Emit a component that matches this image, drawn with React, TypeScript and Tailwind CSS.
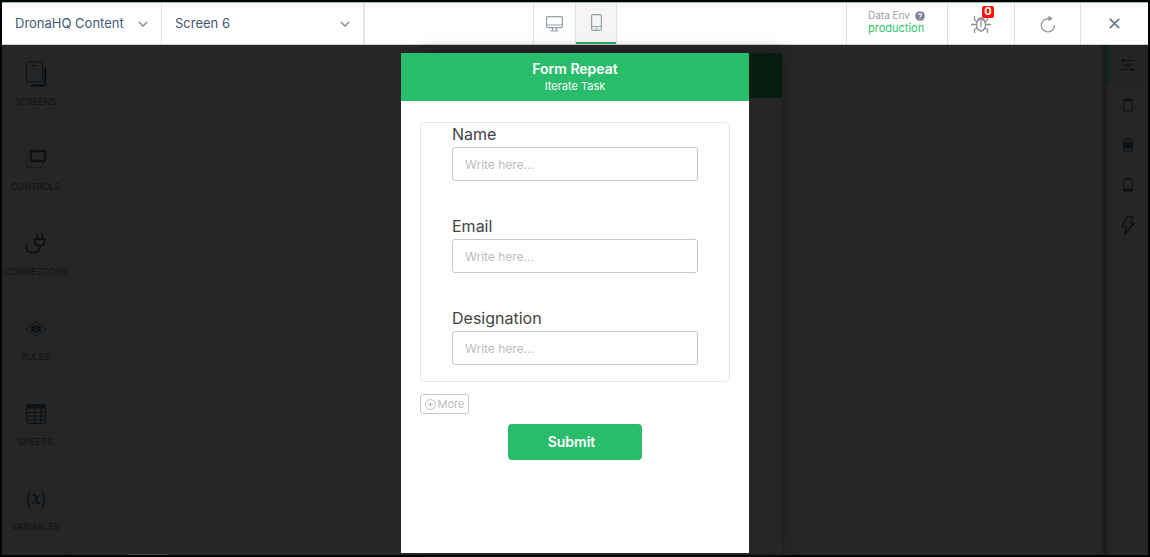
import type { ReactNode } from "react";

const Chevron = () => (
  <svg viewBox="0 0 10 6" className="pointer-events-none h-[6px] w-[10px] shrink-0" fill="none" stroke="#8e9498" strokeWidth="1.5">
    <path d="M.7.7 5 5.1 9.3.7" />
  </svg>
);

function Picker({ label, value, className }: { label: string; value: string; className: string }) {
  return (
    <div className={`grid items-center border-[#e4e6ea] ${className}`}>
      <select
        aria-label={label}
        className="col-start-1 row-start-1 h-full w-full appearance-none bg-transparent pl-[13px] pr-8 text-[13px] text-[#435a75] outline-none"
      >
        <option>{value}</option>
      </select>
      <span className="pointer-events-none col-start-1 row-start-1 mr-[13px] justify-self-end">
        <Chevron />
      </span>
    </div>
  );
}

function TopBar() {
  return (
    <header className="grid h-[43px] shrink-0 grid-cols-[1fr_auto_1fr] border-b border-t border-b-[#d0d0d0] border-t-[#8fc0b4] bg-white">
      <div className="flex">
        <Picker label="App" value="DronaHQ Content" className="w-40 border-r" />
        <Picker label="Screen" value="Screen 6" className="w-[203px] border-r-2" />
      </div>
      <div className="flex">
        <button aria-label="Desktop preview" className="flex w-[42px] items-center justify-center border-l border-[#dfe1e3]">
          <svg viewBox="0 0 17 16" className="h-4 w-[17px]" fill="none" stroke="#93a1a8" strokeWidth="1.2">
            <rect x=".6" y=".6" width="15.800" height="11" rx="1.2" />
            <path d="M.5 9h16M6.5 11.500v3M10.500 11.500v3M4.500 15h8" />
          </svg>
        </button>
        <button aria-label="Mobile preview" className="flex w-[42px] flex-col border-x border-[#dfe1e3] bg-[#f5f5f5]">
          <span className="flex w-full flex-1 items-center justify-center">
            <svg viewBox="0 0 11 17" className="h-[17px] w-[11px]" fill="none" stroke="#93a1a8" strokeWidth="1.2">
              <rect x=".6" y=".6" width="9.800" height="15.800" rx="1.5" />
              <path d="M.5 12.500h10M4.500 14.500h2" />
            </svg>
          </span>
          <span className="h-[2px] w-full bg-[#29ae65]" />
        </button>
      </div>
      <div className="flex justify-end">
        <div className="w-[101px] border-l border-[#dfe1e3] pl-[21px] pt-[6px]">
          <div className="flex items-center gap-[5px] text-[10px] leading-[13px] text-[#9a9fa5]">
            Data Env
            <svg viewBox="0 0 10 10" className="h-[10px] w-[10px]">
              <circle cx="5" cy="5" r="4.8" fill="#7f8294" />
              <path d="M3.6 4c0-1.9 2.9-1.8 2.9-.1C6.500 5 5.100 4.900 5.100 6M5.100 6.900v1" fill="none" stroke="#fff" strokeWidth="1.100" />
            </svg>
          </div>
          <div className="text-[11px] leading-[13px] text-[#2cc56f]">production</div>
        </div>
        <button aria-label="Debug, 0 issues" className="flex w-[67px] items-center justify-center border-l border-[#dfe1e3]">
          <span className="relative">
            <svg viewBox="0 0 20 18" className="h-[18px] w-5" fill="none" stroke="#8b9094" strokeWidth="1.300">
              <ellipse cx="10" cy="10" rx="4.500" ry="6" />
              <path d="M7 5.200c0-3 6-3 6 0M10 5v7M0 9.500h5.500M14.500 9.500H20M6 7 3.500 4.500V1M14 7l2.500-2.500V1M6 13l-2.500 1.500V18M14 13l2.500 1.500V18" />
            </svg>
            <span className="absolute -top-[9px] left-[11px] flex h-3 w-3 items-center justify-center rounded-[2px] bg-[#fb1208] text-[11px] font-bold leading-none text-white">
              0
            </span>
          </span>
        </button>
        <button aria-label="Reload" className="flex w-[66px] items-center justify-center border-l border-[#dfe1e3]">
          <svg viewBox="0 0 16 18" className="h-[18px] w-4" fill="none" stroke="#8b9094" strokeWidth="1.200">
            <path d="M9.500 3.600H8A6.700 6.700 0 1 0 14.700 10.300" />
            <path d="M8.500.8v5.400l4.200-2.700z" fill="#8b9094" stroke="none" />
          </svg>
        </button>
        <button aria-label="Close" className="flex w-[68px] items-center justify-center border-l border-[#dfe1e3]">
          <svg viewBox="0 0 11 11" className="h-[11px] w-[11px]" fill="none" stroke="#6e7b86" strokeWidth="1.700">
            <path d="m.8.8 9.400 9.400M10.200.8.8 10.200" />
          </svg>
        </button>
      </div>
    </header>
  );
}

const tools: { name: string; icon: ReactNode }[] = [
  {
    name: "SCREENS",
    icon: (
      <>
        <rect x="4.500" y="2" width="16" height="20" rx="2" strokeWidth="1" />
        <path d="M10.500 5.500h4.500M12 19h1" strokeWidth="1.200" />
        <path d="M23 7.500v16q0 2-2 2H9" strokeWidth="2.400" />
      </>
    ),
  },
  {
    name: "CONTROLS",
    icon: (
      <>
        <rect x="9" y="6" width="14" height="10" rx="1" strokeWidth="2.400" />
        <path d="M8 10.500H6q-1.500 0-1.500 1.500v9q0 1.500 1.500 1.500h13q1.500 0 1.500-1.500v-3.500" strokeDasharray="2 1" strokeWidth="1" />
      </>
    ),
  },
  {
    name: "CONNECTORS",
    icon: <path d="M15 3.500v5M20 3.500v5M11.500 8.800h12.500M13 9v3.500a5 5 0 0 0 9.500 0V9M17.800 16v2.500q-1 4-4 4H9q-4.500-.5-4.500-5V14" strokeWidth="1.800" />,
  },
  {
    name: "RULES",
    icon: (
      <>
        <path d="M4.500 14Q10 10 14 6.500 18 10 23.500 14 18 18 14 21.500 10 18 4.500 14Z" strokeWidth="1" />
        <ellipse cx="14" cy="14" rx="5" ry="3.800" fill="#0b1115" stroke="none" />
        <circle cx="14" cy="14" r="1.500" stroke="#262626" strokeWidth=".7" />
      </>
    ),
  },
  {
    name: "SHEETS",
    icon: (
      <>
        <rect x="4.500" y="4.500" width="19" height="19" rx="1.500" strokeWidth="1" />
        <path d="M4 4.500h20v4H4z" fill="#0b1115" stroke="none" />
        <path d="M4 12.500h20M4 16h20M4 20h20M13 8v16M19 8v16" strokeWidth="1" />
      </>
    ),
  },
  {
    name: "VARIABLES",
    icon: (
      <>
        <path d="M8.500 6.500Q6.300 6.500 6.500 9v2.500Q6.500 14 4.500 14q2 0 2 2.500V19q-.2 2.500 2 2.500M19.500 6.500q2.200 0 2 2.500v2.500q0 2.500 2 2.500-2 0-2 2.500V19q.2 2.500-2 2.500" strokeWidth="1.200" />
        <path d="M10.500 10.500q2-1.500 3 1l1.500 6q1 2 3 0" strokeWidth="2.200" />
        <path d="M18.500 10.500q-1.500-1.500-4 3t-4.500 5" strokeWidth="1.300" />
      </>
    ),
  },
];

function ToolRail() {
  return (
    <nav aria-label="Tools" className="w-[68px] shrink-0 border-r border-[#222]">
      {tools.map((t) => (
        <button
          key={t.name}
          className="flex w-full flex-col items-center border-b border-[#222] pb-5 pt-[15px] text-[9px] leading-[14px] text-[#111] last:border-0 last:pb-0"
        >
          <svg viewBox="0 0 28 28" className="mb-[7px] h-7 w-7" fill="none" stroke="#0b1115">
            {t.icon}
          </svg>
          {t.name}
        </button>
      ))}
    </nav>
  );
}

const panels: { name: string; icon: ReactNode }[] = [
  {
    name: "Properties",
    icon: (
      <>
        <path d="M4 5.500h12M4 10h12M4 14.500h12" strokeWidth="1" />
        <path d="M5.500 4v3M10 8.500v3M14 13v3" strokeWidth="2.600" />
      </>
    ),
  },
  {
    name: "Header",
    icon: (
      <>
        <rect x="5.500" y="4" width="9" height="12" rx="1.500" strokeWidth="1" />
        <path d="M5.500 5h9" strokeWidth="2.400" />
      </>
    ),
  },
  {
    name: "Body",
    icon: (
      <>
        <rect x="5.500" y="4" width="9" height="12" rx="1.500" strokeWidth="1" />
        <path d="M5.500 10h9" strokeWidth="7" />
      </>
    ),
  },
  {
    name: "Footer",
    icon: (
      <>
        <rect x="5.500" y="4" width="9" height="12" rx="1.500" strokeWidth="1" />
        <path d="M5.500 15h9" strokeWidth="2.400" />
      </>
    ),
  },
  {
    name: "Actions",
    icon: <path d="M9 2h6l-3 6h4L7 19l1.500-7.500H4z" strokeWidth="1.400" strokeLinejoin="round" />,
  },
];

function PanelRail() {
  return (
    <nav aria-label="Panels" className="w-[41px] shrink-0">
      {panels.map((p, i) => (
        <button
          key={p.name}
          aria-label={p.name}
          className={`flex h-10 w-full items-center justify-center border-l-2 pr-[2px] ${i === 0 ? "border-[#082b1b] bg-[#242424]" : "border-transparent"}`}
        >
          <svg viewBox="0 0 20 20" className="h-5 w-5" fill="none" stroke="#0b1115">
            {p.icon}
          </svg>
        </button>
      ))}
    </nav>
  );
}

function Preview() {
  return (
    <section className="flex w-[348px] flex-col bg-white">
      <div className="flex h-12 flex-col items-center bg-[#29bd6b] pt-[6px] text-white">
        <h1 className="text-[14px] font-semibold leading-[20px]">Form Repeat</h1>
        <p className="text-[11px] leading-[14px]">Iterate Task</p>
      </div>
      <form className="flex flex-col px-[19px] pt-[21px]" onSubmit={(e) => e.preventDefault()}>
        <div className="flex flex-col gap-[34px] rounded-[4px] border border-[#e6e6e6] px-[31px] pb-4">
          {["Name", "Email", "Designation"].map((f) => (
            <div key={f} className="flex flex-col gap-[2px]">
              <label htmlFor={f} className="text-[16px] leading-[22px] text-[#444]">{f}</label>
              <input
                id={f}
                placeholder="Write here..."
                className="h-[34px] w-full rounded-[3px] border border-[#c6c6c6] px-3 text-[12px] outline-none placeholder:text-[#bdbdbd]"
              />
            </div>
          ))}
        </div>
        <button
          type="button"
          className="mt-3 flex h-5 w-[49px] items-center justify-center gap-[2px] rounded-[3px] border border-[#c6c6c6] text-[11px] text-[#bdbdbd]"
        >
          <svg viewBox="0 0 11 11" className="h-[11px] w-[11px] shrink-0" fill="none" stroke="#bdbdbd">
            <circle cx="5.500" cy="5.500" r="4.900" />
            <path d="M5.500 3v5M3 5.500h5" />
          </svg>
          More
        </button>
        <button className="mt-[10px] h-9 w-[134px] self-center rounded-[4px] bg-[#29bd6b] pb-[2px] pr-[7px] text-[14px] font-semibold text-white">
          Submit
        </button>
      </form>
    </section>
  );
}

export default function App() {
  return (
    <div className="flex min-h-screen flex-col bg-black px-[2px] pb-[2px] pt-[2px] font-['Inter','Noto_Sans',sans-serif]">
      <TopBar />
      <div className="relative flex flex-1 bg-[#262626]">
        <ToolRail />
        <main className="flex flex-1 justify-center pl-8 pt-2">
          <div className="w-[360px] shadow-[0_0_12px_#1c1c1c]">
            <div className="h-[45px] bg-[#061d10]" />
            <div className="mx-5 mt-[22px] h-[251px] rounded-[4px] border border-[#222]" />
          </div>
        </main>
        <div className="w-[5px] shrink-0 rounded-full bg-[#1c1c1c]" />
        <PanelRail />
        <div className="absolute inset-0 flex justify-center pb-px pt-2">
          <Preview />
        </div>
      </div>
      <div className="flex h-px bg-[#1d2a33] pl-[125px]">
        <div className="w-10 bg-[#4a4f52]" />
      </div>
    </div>
  );
}
